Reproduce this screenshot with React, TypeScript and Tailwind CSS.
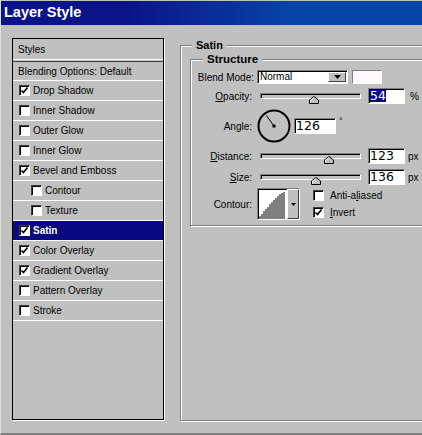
import React from "react";

const EFFECTS = [
  { label: "Drop Shadow", checked: true, indent: false },
  { label: "Inner Shadow", checked: false, indent: false },
  { label: "Outer Glow", checked: false, indent: false },
  { label: "Inner Glow", checked: false, indent: false },
  { label: "Bevel and Emboss", checked: true, indent: false },
  { label: "Contour", checked: false, indent: true },
  { label: "Texture", checked: false, indent: true },
  { label: "Satin", checked: true, indent: false, active: true },
  { label: "Color Overlay", checked: true, indent: false },
  { label: "Gradient Overlay", checked: true, indent: false },
  { label: "Pattern Overlay", checked: false, indent: false },
  { label: "Stroke", checked: false, indent: false },
];

function CheckBox({ checked }: { checked: boolean }) {
  return (
    <span className="flex h-[11px] w-[11px] shrink-0 items-center justify-center border border-t-[#404040] border-l-[#404040] border-r-white border-b-white bg-white shadow-[inset_1px_1px_0_#000]">
      {checked && (
        <svg width="9" height="9" viewBox="0 0 9 9">
          <path d="M1.5 4.5 L3.5 6.5 L7.5 1.5" fill="none" stroke="#000" strokeWidth="1.6" />
        </svg>
      )}
    </span>
  );
}

function Slider({ pos }: { pos: number }) {
  return (
    <div className="relative h-[14px] w-[101px]">
      <div className="absolute left-0 right-0 top-[4px] h-[6px] border border-t-[#808080] border-l-[#808080] border-r-white border-b-white bg-[#c0c0c0] shadow-[inset_1px_1px_0_#000]" />
      <svg
        className="absolute top-[7px]"
        style={{ left: pos - 5 }}
        width="10"
        height="8"
        viewBox="0 0 10 8"
      >
        <path d="M5 0.5 L9.5 4 L9.5 7.5 L0.5 7.5 L0.5 4 Z" fill="#c0c0c0" stroke="#000" strokeWidth="1" />
        <path d="M1.5 4.3 L5 1.6 M1.5 4.3 L1.5 6.5" stroke="#fff" strokeWidth="1" fill="none" />
      </svg>
    </div>
  );
}

function Field({ value, selected, wide }: { value: string; selected?: boolean; wide?: boolean }) {
  return (
    <div
      className={`flex h-[16px] items-center border border-t-[#808080] border-l-[#808080] border-r-white border-b-white bg-white pl-[1px] shadow-[inset_1px_1px_0_#000] text-[12.5px] leading-none text-black ${wide ? "w-[42px]" : "w-[37px]"}`}
      style={{ fontFamily: '"DejaVu Sans", Verdana, sans-serif' }}
    >
      <span className={selected ? "bg-[#0a0a80] text-white" : ""}>{value}</span>
    </div>
  );
}

function Dial() {
  const a = (126 * Math.PI) / 180;
  const x2 = 17 + Math.cos(a) * 13;
  const y2 = 17 - Math.sin(a) * 13;
  return (
    <svg width="34" height="34" viewBox="0 0 34 34">
      <circle cx="17" cy="17" r="15.5" fill="none" stroke="#000" strokeWidth="2" />
      <line x1="17" y1="17" x2={x2} y2={y2} stroke="#000" strokeWidth="1" />
      <rect x="15.5" y="15.5" width="3" height="3" fill="#000" />
    </svg>
  );
}

function ContourPicker() {
  return (
    <div className="flex h-[32px] w-[43px] border border-t-[#808080] border-l-[#808080] border-r-white border-b-white">
      <div className="h-full w-[29px] bg-white shadow-[inset_1px_1px_0_#000]">
        <svg width="29" height="30" viewBox="0 0 29 30">
          <path
            d="M1 30 L1 27 L3 27 L3 25 L5 25 L5 22 L7 22 L7 20 L9 20 L9 18 L11 18 L11 15 L13 15 L13 13 L15 13 L15 11 L17 11 L17 9 L19 9 L19 7 L21 7 L21 5 L23 5 L23 4 L25 4 L25 3 L27 3 L27 30 Z"
            fill="#808080"
          />
        </svg>
      </div>
      <div className="flex h-full w-[12px] items-center justify-center border border-t-white border-l-white border-r-[#404040] border-b-[#404040] bg-[#c0c0c0]">
        <svg width="5" height="3" viewBox="0 0 5 3">
          <path d="M0 0 L5 0 L2.5 3 Z" fill="#000" />
        </svg>
      </div>
    </div>
  );
}

function Label({ children }: { children: React.ReactNode }) {
  return <div className="w-[63px] shrink-0 pr-[2px] text-right">{children}</div>;
}

export default function App() {
  return (
    <div
      className="relative h-[435px] w-[422px] overflow-hidden border-b-2 border-l border-b-[#808080] border-l-[#dfdfdf] bg-[#c0c0c0] text-[10px] text-black"
      style={{ fontFamily: '"Liberation Sans", Arial, sans-serif' }}
    >
      {/* title bar */}
      <div className="mt-[1px] flex h-[24px] items-center bg-[linear-gradient(90deg,#0a1488_0%,#0a1488_30%,#0645a8_70%,#0645a8_100%)] pl-[3px]">
        <span className="text-[14.5px] font-bold text-white">Layer Style</span>
      </div>

      <div className="flex">
        {/* styles list */}
        <div className="ml-[11px] mt-[13px] h-[382px] w-[152px] shrink-0 border border-black shadow-[1px_1px_0_#fff]">
          <div className="flex h-[20px] items-center pl-[5px]">Styles</div>
          <div className="h-[1px] bg-white" />
          <div className="h-[1px] bg-[#c0c0c0]" />
          <div className="h-[1px] bg-[#404040]" />
          <div className="flex h-[19px] items-center border-b border-white pl-[5px]">Blending Options: Default</div>
          {EFFECTS.map((e) => (
            <div
              key={e.label}
              className={`flex h-[20px] items-center gap-[3px] border-b border-white ${e.indent ? "pl-[18px]" : "pl-[6px]"} ${e.active ? "bg-[#0a0a80] font-bold text-white" : ""}`}
            >
              <CheckBox checked={e.checked} />
              <span>{e.label}</span>
            </div>
          ))}
        </div>

        {/* satin group */}
        <div className="relative ml-[16px] mr-[-20px] mt-[20px] h-[376px] flex-1 border border-[#808080] pl-[9px] pt-[13px] shadow-[inset_1px_1px_0_#fff,1px_1px_0_#fff]">
          <span className="absolute left-[11px] top-[-7px] bg-[#c0c0c0] px-[4px] text-[11px] font-bold leading-[13px]">Satin</span>

          <div className="relative h-[167px] border border-[#808080] shadow-[inset_1px_1px_0_#fff,1px_1px_0_#fff]">
            <span className="absolute left-[12px] top-[-7px] bg-[#c0c0c0] px-[4px] text-[11.5px] font-bold leading-[13px]">Structure</span>

            <div className="flex flex-col pt-[10px]">
              {/* blend mode */}
              <div className="flex h-[14px] items-center">
                <div className="w-[66px] shrink-0 pr-[3px] text-right">Blend Mode:</div>
                <div className="flex h-[14px] w-[91px] items-center border border-t-[#808080] border-l-[#808080] border-r-white border-b-white bg-white shadow-[inset_1px_1px_0_#000]">
                  <span className="flex-1 pl-[2px] leading-none">Normal</span>
                  <div className="mr-[1px] flex h-[10px] w-[18px] items-center justify-center border border-t-white border-l-white border-r-[#404040] border-b-[#404040] bg-[#c0c0c0]">
                    <svg width="7" height="4" viewBox="0 0 7 4">
                      <path d="M0 0 L7 0 L3.5 4 Z" fill="#000" />
                    </svg>
                  </div>
                </div>
                <div className="ml-[4px] h-[14px] w-[30px] border border-t-[#808080] border-l-[#808080] border-r-white border-b-white bg-[#fcf8fc]" />
              </div>

              {/* opacity */}
              <div className="mt-[4px] flex h-[16px] items-center">
                <Label>
                  <span className="underline">O</span>pacity:
                </Label>
                <div className="ml-[6px]">
                  <Slider pos={54} />
                </div>
                <div className="ml-[7px]">
                  <Field value="54" selected />
                </div>
                <span className="ml-[5px]">%</span>
              </div>

              {/* angle */}
              <div className="mt-[5px] flex h-[34px] items-center">
                <Label>
                  An<span className="underline">g</span>le:
                </Label>
                <div className="ml-[3px]">
                  <Dial />
                </div>
                <div className="ml-[3px]">
                  <Field value="126" wide />
                </div>
                <span className="mb-[8px] ml-[3px] text-[9px]">°</span>
              </div>

              {/* distance */}
              <div className="mt-[5px] flex h-[16px] items-center">
                <Label>
                  <span className="underline">D</span>istance:
                </Label>
                <div className="ml-[6px]">
                  <Slider pos={69} />
                </div>
                <div className="ml-[7px]">
                  <Field value="123" />
                </div>
                <span className="ml-[3px]">px</span>
              </div>

              {/* size */}
              <div className="mt-[5px] flex h-[16px] items-center">
                <Label>
                  <span className="underline">S</span>ize:
                </Label>
                <div className="ml-[6px]">
                  <Slider pos={56} />
                </div>
                <div className="ml-[7px]">
                  <Field value="136" />
                </div>
                <span className="ml-[3px]">px</span>
              </div>

              {/* contour */}
              <div className="mt-[3px] flex h-[32px] items-center">
                <Label>Contour:</Label>
                <div className="ml-[3px]">
                  <ContourPicker />
                </div>
                <div className="ml-[13px] flex flex-col gap-[2px]">
                  <div className="flex items-center gap-[6px]">
                    <CheckBox checked={false} />
                    <span>
                      Anti-a<span className="underline">l</span>iased
                    </span>
                  </div>
                  <div className="flex items-center gap-[6px]">
                    <CheckBox checked />
                    <span>
                      <span className="underline">I</span>nvert
                    </span>
                  </div>
                </div>
              </div>
            </div>
          </div>
        </div>
      </div>
    </div>
  );
}
